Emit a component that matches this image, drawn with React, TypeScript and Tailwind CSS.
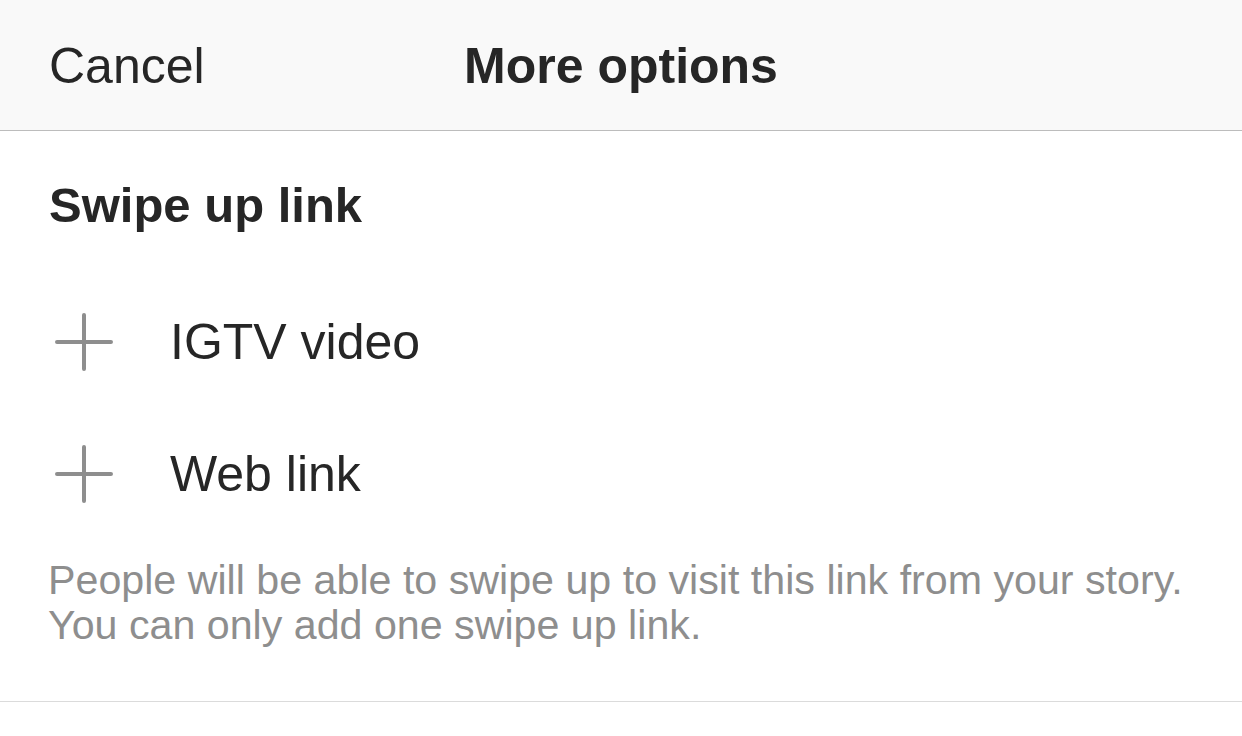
import React from "react";

const PlusIcon: React.FC = () => (
    <svg width="60" height="60" viewBox="0 0 60 60" className="shrink-0">
        <path
            d="M30 3V57M3 30H57"
            stroke="#8e8e8e"
            strokeWidth="4"
            strokeLinecap="round"
            fill="none"
        />
    </svg>
);

const App: React.FC = () => {
    const options = ["IGTV video", "Web link"];

    return (
        <div
            className="w-[1242px] h-[736px] bg-white text-[#262626] overflow-hidden"
            style={{ fontFamily: '"Liberation Sans", Arial, sans-serif' }}
        >
            {/* Header */}
            <div className="h-[131px] pt-[2px] bg-[#f9f9f9] border-b border-[#bcbcbc] grid grid-cols-[1fr_auto_1fr] items-center">
                <div className="pl-[49px] text-[50px] leading-none">Cancel</div>
                <div className="text-[50px] leading-none font-bold">
                    More options
                </div>
                <div />
            </div>

            {/* Section title */}
            <div className="h-[145px] pt-[4px] flex items-center px-[49px]">
                <h2 className="text-[49px] leading-none font-bold">
                    Swipe up link
                </h2>
            </div>

            {/* Options */}
            {options.map((label) => (
                <div key={label} className="h-[132px] flex items-center pl-[54px]">
                    <PlusIcon />
                    <span className="ml-[56px] text-[50px] leading-none">
                        {label}
                    </span>
                </div>
            ))}

            {/* Footer note */}
            <div className="h-[162px] pt-[18px] px-[48px] border-b border-[#dbdbdb]">
                <p className="text-[41.2px] leading-[45px] text-[#8e8e8e] whitespace-nowrap">
                    People will be able to swipe up to visit this link from your story.
                    <br />
                    You can only add one swipe up link.
                </p>
            </div>
        </div>
    );
};

export default App;
